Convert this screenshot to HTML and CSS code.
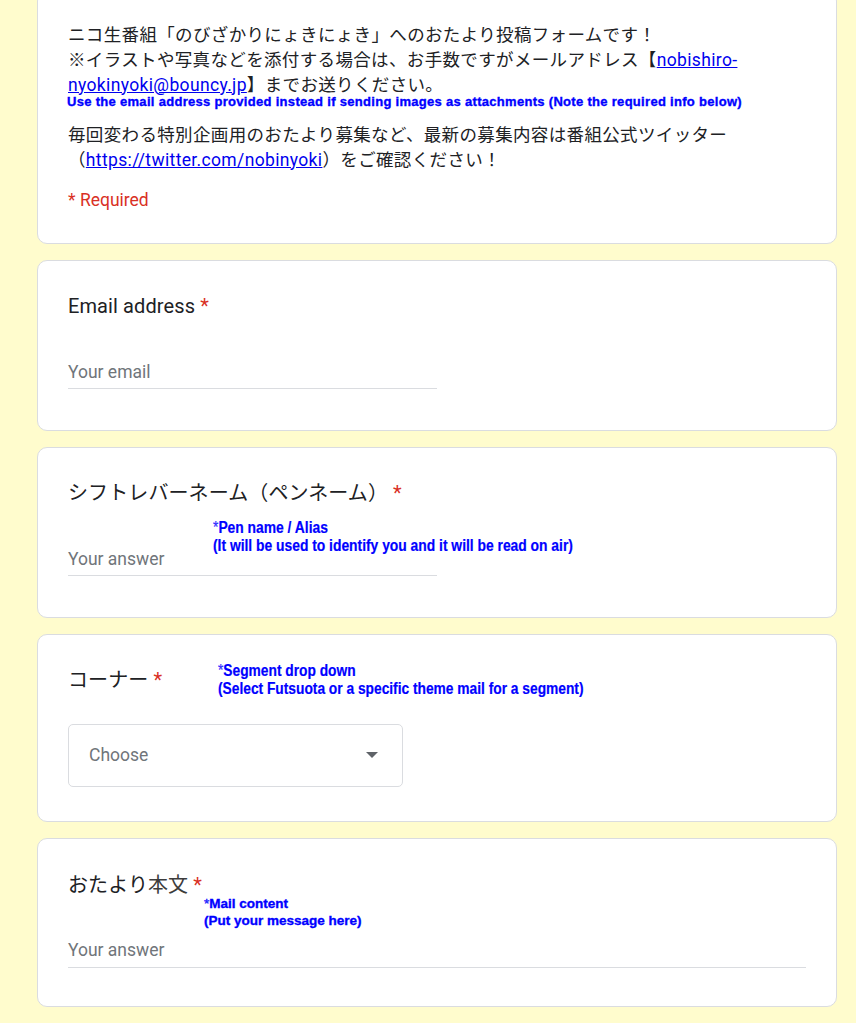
FILE: index.html
```html
<!DOCTYPE html>
<html lang="ja">
<head>
<meta charset="utf-8">
<title>おたより投稿フォーム</title>
<link rel="stylesheet" href="styles.css">
</head>
<body>
<main class="form">
  <section class="card card-intro">
    <p class="desc">ニコ生番組「のびざかりにょきにょき」へのおたより投稿フォームです！<br>※イラストや写真などを添付する場合は、お手数ですがメールアドレス【<a href="#">nobishiro-<br>nyokinyoki@bouncy.jp</a>】までお送りください。</p>
    <p class="desc desc-last">毎回変わる特別企画用のおたより募集など、最新の募集内容は番組公式ツイッター<br>（<a href="#">https://twitter.com/nobinyoki</a>）をご確認ください！</p>
    <p class="required-note">* Required</p>
    <div class="note note-wide note-intro">Use the email address provided instead if sending images as attachments (Note the required info below)</div>
  </section>

  <section class="card">
    <h2 class="q-title">Email address <span class="star">*</span></h2>
    <div class="text-input short"><span class="placeholder">Your email</span></div>
  </section>

  <section class="card">
    <h2 class="q-title">シフトレバーネーム（ペンネーム） <span class="star">*</span></h2>
    <div class="text-input short"><span class="placeholder">Your answer</span></div>
    <div class="note note-narrow note-pen"><span class="ast">*</span>Pen name / Alias<br>(It will be used to identify you and it will be read on air)</div>
  </section>

  <section class="card card-select">
    <h2 class="q-title">コーナー <span class="star">*</span></h2>
    <div class="select">
      <span class="placeholder">Choose</span>
      <svg class="caret" width="12" height="6" viewBox="0 0 12 6"><path d="M0 0 L12 0 L6 6 Z" fill="#5f6368"/></svg>
    </div>
    <div class="note note-narrow note-corner"><span class="ast">*</span>Segment drop down<br>(Select Futsuota or a specific theme mail for a segment)</div>
  </section>

  <section class="card card-body">
    <h2 class="q-title">おたより<span class="alt">本文</span> <span class="star">*</span></h2>
    <div class="text-input long"><span class="placeholder">Your answer</span></div>
    <div class="note note-wide note-mail"><span class="ast">*</span>Mail content<br>(Put your message here)</div>
  </section>
</main>
</body>
</html>
```

FILE: styles.css
```css
html, body {
  margin: 0;
  padding: 0;
  background: #fffccd;
}

body {
  font-family: Roboto, "Noto Sans CJK JP", sans-serif;
  color: #202124;
  overflow: hidden;
}

.form {
  width: 800px;
  margin-left: 37px;
  display: flex;
  flex-direction: column;
  gap: 16px;
}

.card {
  position: relative;
  box-sizing: border-box;
  background: #ffffff;
  border: 1px solid #dadce0;
  border-radius: 10px;
  padding: 30px 30px 41px;
}

.card-intro {
  margin-top: -9px;
  padding: 30.5px 30px 30px;
}

.desc {
  margin: 0 0 25px;
  font-size: 17.5px;
  line-height: 25px;
  letter-spacing: 0.35px;
  color: #202124;
}

.desc.desc-last {
  margin-bottom: 0;
}

.desc a {
  color: #0000ee;
  text-decoration: underline;
}

.required-note {
  margin: 15px 0 0;
  font-size: 17.5px;
  line-height: 25px;
  color: #d93025;
}

.q-title {
  margin: 0;
  font-weight: 400;
  font-size: 20px;
  line-height: 30px;
  letter-spacing: 0.1px;
  color: #202124;
}

.q-title .star {
  color: #d93025;
}

.q-title .alt {
  font-family: "Noto Sans CJK SC", sans-serif;
  color: #3c3c3c;
}

.text-input {
  margin-top: 39px;
  padding-bottom: 3px;
  border-bottom: 1px solid #dadce0;
  line-height: 25px;
  font-size: 17.5px;
}

.text-input.short {
  width: 369px;
}

.text-input.long {
  width: 100%;
  margin-top: 38.5px;
  padding-bottom: 3.5px;
}

.card-body {
  padding-bottom: 38px;
}

.placeholder {
  color: #70757a;
  font-size: 17.5px;
}

.card-select {
  padding-bottom: 34px;
}

.select {
  box-sizing: border-box;
  margin-top: 29px;
  width: 335px;
  height: 63px;
  border: 1px solid #dadce0;
  border-radius: 5px;
  padding: 0 24px 0 20px;
  display: flex;
  align-items: center;
  justify-content: space-between;
}

.caret {
  display: block;
}

.note {
  position: absolute;
  color: #0000ff;
  font-weight: 700;
  white-space: nowrap;
  font-family: "Liberation Sans", Arial, sans-serif;
}

.note .ast {
  font-weight: 400;
  color: #3a3aff;
}

.note-wide {
  font-size: 13px;
  letter-spacing: 0.3px;
  -webkit-text-stroke: 0.35px #0000ff;
}

.note-narrow {
  font-size: 16px;
  line-height: 18px;
  transform: scaleX(0.87);
  transform-origin: left top;
  -webkit-text-stroke: 0.2px #0000ff;
}

.note-intro {
  left: 29px;
  top: 103px;
  line-height: 13px;
}

.note-pen {
  left: 175px;
  top: 71px;
  transform: scaleX(0.865);
}

.note-corner {
  left: 180px;
  top: 27px;
  transform: scaleX(0.86);
}

.note-mail {
  left: 166px;
  top: 56.5px;
  line-height: 17px;
  font-size: 13.5px;
  letter-spacing: 0;
}
```
